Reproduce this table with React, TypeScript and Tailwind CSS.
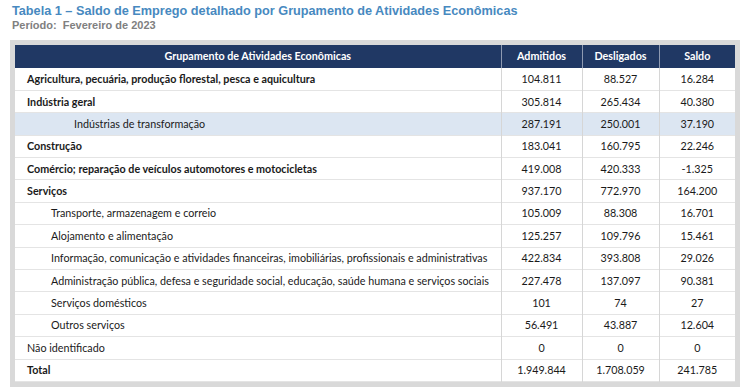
import React from 'react';

interface Row {
  label: string;
  admitidos: string;
  desligados: string;
  saldo: string;
  level: 0 | 1 | 2;
  bold?: boolean;
  highlight?: boolean;
}

const rows: Row[] = [
  { label: 'Agricultura, pecuária, produção florestal, pesca e aquicultura', admitidos: '104.811', desligados: '88.527', saldo: '16.284', level: 0, bold: true },
  { label: 'Indústria geral', admitidos: '305.814', desligados: '265.434', saldo: '40.380', level: 0, bold: true },
  { label: 'Indústrias de transformação', admitidos: '287.191', desligados: '250.001', saldo: '37.190', level: 2, highlight: true },
  { label: 'Construção', admitidos: '183.041', desligados: '160.795', saldo: '22.246', level: 0, bold: true },
  { label: 'Comércio; reparação de veículos automotores e motocicletas', admitidos: '419.008', desligados: '420.333', saldo: '-1.325', level: 0, bold: true },
  { label: 'Serviços', admitidos: '937.170', desligados: '772.970', saldo: '164.200', level: 0, bold: true },
  { label: 'Transporte, armazenagem e correio', admitidos: '105.009', desligados: '88.308', saldo: '16.701', level: 1 },
  { label: 'Alojamento e alimentação', admitidos: '125.257', desligados: '109.796', saldo: '15.461', level: 1 },
  { label: 'Informação, comunicação e atividades financeiras, imobiliárias, profissionais e administrativas', admitidos: '422.834', desligados: '393.808', saldo: '29.026', level: 1 },
  { label: 'Administração pública, defesa e seguridade social, educação, saúde humana e serviços sociais', admitidos: '227.478', desligados: '137.097', saldo: '90.381', level: 1 },
  { label: 'Serviços domésticos', admitidos: '101', desligados: '74', saldo: '27', level: 1 },
  { label: 'Outros serviços', admitidos: '56.491', desligados: '43.887', saldo: '12.604', level: 1 },
  { label: 'Não identificado', admitidos: '0', desligados: '0', saldo: '0', level: 0 },
  { label: 'Total', admitidos: '1.949.844', desligados: '1.708.059', saldo: '241.785', level: 0, bold: true },
];

const indent = ['pl-[12px]', 'pl-[36px]', 'pl-[59px]'];

const App: React.FC = () => {
  return (
    <div className="w-[750px] h-[391px] bg-white overflow-hidden pl-[10px] pt-[4px] font-['Lato',sans-serif] text-[#1a1a1a]">
      <h1 className="ml-[2px] text-[12.7px] leading-[15px] font-bold text-[#4789c0] font-['Liberation_Sans',Arial,sans-serif]">
        Tabela 1 – Saldo de Emprego detalhado por Grupamento de Atividades Econômicas
      </h1>
      <p className="ml-[2px] text-[11px] leading-[13px] font-bold text-[#808080] font-['Liberation_Sans',Arial,sans-serif] whitespace-pre">
        Período:  Fevereiro de 2023
      </p>

      <div className="mt-[8px] w-[730px] bg-[#d9d9d9] px-[5px] pt-[5px] pb-[5px]">
        <table className="w-[720px] border-collapse table-fixed text-[10.75px]">
          <colgroup>
            <col className="w-[486px]" />
            <col className="w-[81px]" />
            <col className="w-[77px]" />
            <col className="w-[76px]" />
          </colgroup>
          <thead>
            <tr className="h-[23px] bg-[#203864] text-white font-bold">
              <th className="text-center border-r border-[#8e9ab2]">Grupamento de Atividades Econômicas</th>
              <th className="text-center border-r border-[#8e9ab2]">Admitidos</th>
              <th className="text-center border-r border-[#8e9ab2]">Desligados</th>
              <th className="text-center">Saldo</th>
            </tr>
          </thead>
          <tbody>
            {rows.map((r) => (
              <tr key={r.label} className={`h-[22.4px] border-b border-[#e4e4e4] ${r.highlight ? 'bg-[#dce6f2]' : 'bg-white'}`}>
                <td className={`${indent[r.level]} whitespace-nowrap ${r.bold ? 'font-bold' : ''} border-r border-[#d6d6d6]`}>{r.label}</td>
                <td className="text-center border-r border-[#d6d6d6]">{r.admitidos}</td>
                <td className="text-center border-r border-[#d6d6d6]">{r.desligados}</td>
                <td className="text-center">{r.saldo}</td>
              </tr>
            ))}
          </tbody>
        </table>
      </div>
    </div>
  );
};

export default App;
